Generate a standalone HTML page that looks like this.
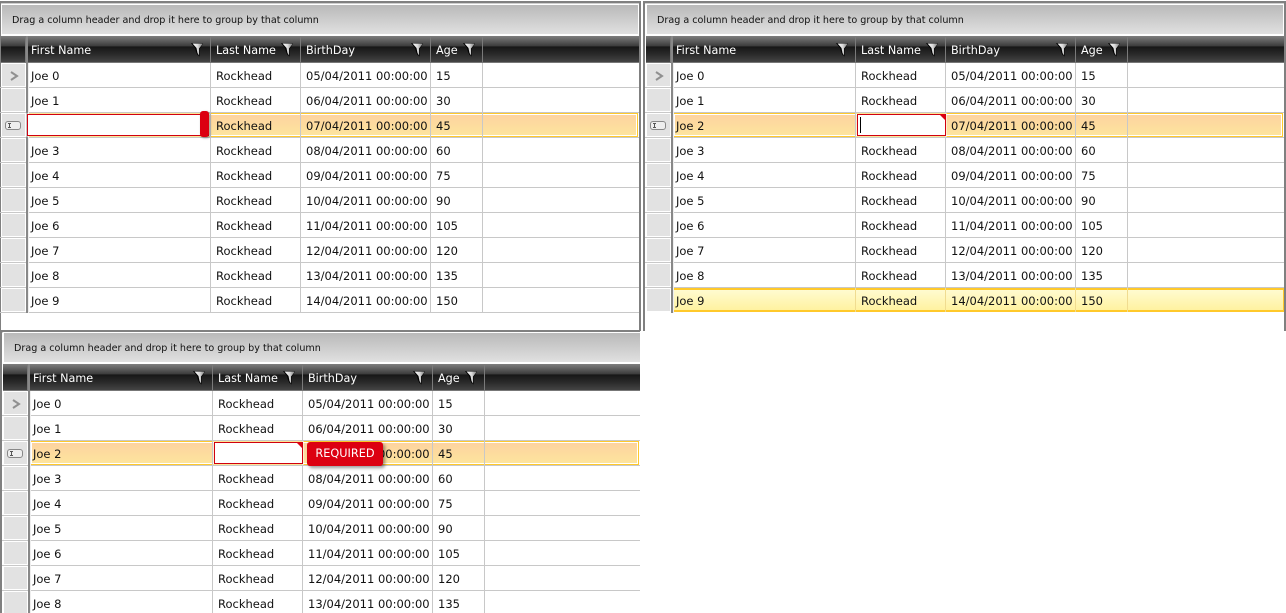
<!DOCTYPE html>
<html><head><meta charset="utf-8"><style>
html,body{margin:0;padding:0;background:#fff;width:1286px;height:613px;overflow:hidden}
body{position:relative;font-family:"DejaVu Sans","Liberation Sans",sans-serif;font-size:11.5px;color:#111}
.clip{position:absolute;overflow:hidden}
.g{position:absolute;top:0;left:0;width:643px;height:331px}
.o{position:absolute;left:-2px;top:1px;width:643px;height:331px;box-sizing:border-box;border:3px solid #808080;border-width:2px 2px 2px 3px;box-shadow:inset 0 1px #cfcfcf}
.o.n{border-bottom:0;border-left-width:2px;height:330px}
.t{position:absolute;left:1px;top:4px;width:638px;height:31px;box-sizing:border-box;border:1px solid #fff;background:linear-gradient(#b9b9b9,#e0e0e0);font-size:9.6px;line-height:31px;padding-left:10px;color:#111}
.h{position:absolute;left:1px;top:36px;width:638px;height:27px;box-sizing:border-box;border-bottom:1px solid #777;background:linear-gradient(#7e7e7e 0,#3c3c3c 38%,#171717 42%,#2a2a2a 70%,#444 100%)}
.h span{position:absolute;top:0;height:26px;line-height:29px;color:#fff;white-space:nowrap;font-size:11.2px}
.s{position:absolute;top:36px;width:1px;height:26px;background:#7a7a7a}
.h svg{position:absolute;top:7px;width:13px;height:14px}
.rows{position:absolute;left:0;top:63px;width:639px}
.r{position:relative;height:25px;box-sizing:border-box;border-bottom:1px solid #c8c8c8}
.r:before{content:"";position:absolute;left:1px;top:0;width:25px;height:24px;box-sizing:border-box;border:1px solid #fff;background:#e2e2e2}
.r span{position:absolute;top:1px;line-height:25px;white-space:nowrap}
.a{left:31px}.b{left:216px}.c{left:306px}.d{left:436px}
.v{position:absolute;top:63px;width:1px;height:250px;background:#c8c8c8}
.w{position:absolute;left:26px;top:36px;width:2px;height:277px;background:#888}
.x{position:absolute;left:28px;top:63px;width:1px;height:250px;background:#eee}
.cur{position:absolute;left:28px;top:113px;width:610px;height:24px;box-sizing:border-box;border:1px solid #ffc92b;box-shadow:inset 0 0 0 1px #fff;background:linear-gradient(#fdd2a0,#fde59d)}
.sel{position:absolute;left:27px;top:288px;width:612px;height:24px;box-sizing:border-box;border:1px solid #ffc92b;border-width:2px 1px;background:linear-gradient(#fffbd0,#fff2a0)}
.e{position:absolute;top:114px;height:22px;box-sizing:border-box;border:1px solid #d0000f;background:#fff;box-shadow:0 0 0 1px rgba(255,255,255,.5)}
.tab{position:absolute;left:200px;top:111px;width:9px;height:26px;background:#dc0011;border-radius:3px;box-shadow:1px 1px 2px rgba(0,0,0,.4)}
.tri{position:absolute;left:294px;top:114px;width:0;height:0;border-top:6px solid #dc0011;border-left:6px solid transparent}
.caret{position:absolute;left:215px;top:117px;width:1px;height:16px;background:#000}
.tip{position:absolute;left:305px;top:114px;width:76px;height:24px;line-height:24px;background:#dc0011;color:#fff;border-radius:3px;text-align:center;font-size:11.3px;box-shadow:2px 2px 3px rgba(0,0,0,.4)}
.ind{position:absolute;left:0;top:0}
.g3{top:-2px;height:285px}
.g3 .o{left:-2px;top:1px;width:640px;height:284px;border-width:3px 0 0 2px}
.g3 .t{width:637px;border-right:0}
.g3 .h{width:637px}
.g3 .rows{width:638px;height:222px;overflow:hidden}
.g3 .cur{width:609px}
.g3 .v,.g3 .x{height:222px}
.g3 .w{height:249px}
.g2 .v{height:225px}
.y{position:absolute;top:288px;width:1px;height:24px;background:#f0dc90}
</style></head><body>
<svg width="0" height="0" style="position:absolute"><defs><linearGradient id="f" x1="0" y1="0" x2="1" y2="0"><stop offset="0" stop-color="#fff"/><stop offset=".5" stop-color="#d8d8d8"/><stop offset="1" stop-color="#777"/></linearGradient></defs></svg>

<div class="clip" style="left:0;top:0;width:641px;height:331px"><div class="g">
<div class="o"></div>
<div class="t">Drag a column header and drop it here to group by that column</div>
<div class="h">
<span style="left:30px">First Name</span><span style="left:215px">Last Name</span><span style="left:305px">BirthDay</span><span style="left:435px">Age</span>
<svg style="left:190px" viewBox="0 0 13 14"><path d="M0 0H12V1L8.5 6V13.5L6.5 12L5 9L4 5Z" fill="#000"/><path d="M1.5 .5H12L8 5.5V12.5L6.5 10L5.5 5Z" fill="url(#f)"/></svg>
<svg style="left:280px" viewBox="0 0 13 14"><path d="M0 0H12V1L8.5 6V13.5L6.5 12L5 9L4 5Z" fill="#000"/><path d="M1.5 .5H12L8 5.5V12.5L6.5 10L5.5 5Z" fill="url(#f)"/></svg>
<svg style="left:410px" viewBox="0 0 13 14"><path d="M0 0H12V1L8.5 6V13.5L6.5 12L5 9L4 5Z" fill="#000"/><path d="M1.5 .5H12L8 5.5V12.5L6.5 10L5.5 5Z" fill="url(#f)"/></svg>
<svg style="left:462px" viewBox="0 0 13 14"><path d="M0 0H12V1L8.5 6V13.5L6.5 12L5 9L4 5Z" fill="#000"/><path d="M1.5 .5H12L8 5.5V12.5L6.5 10L5.5 5Z" fill="url(#f)"/></svg>
</div>
<i class="s" style="left:25px"></i><i class="s" style="left:210px"></i><i class="s" style="left:300px"></i><i class="s" style="left:430px"></i><i class="s" style="left:482px"></i>
<div class="cur"></div>
<div class="rows">
<div class="r"><span class="a">Joe 0</span><span class="b">Rockhead</span><span class="c">05/04/2011 00:00:00</span><span class="d">15</span></div>
<div class="r"><span class="a">Joe 1</span><span class="b">Rockhead</span><span class="c">06/04/2011 00:00:00</span><span class="d">30</span></div>
<div class="r"><span class="b">Rockhead</span><span class="c">07/04/2011 00:00:00</span><span class="d">45</span></div>
<div class="r"><span class="a">Joe 3</span><span class="b">Rockhead</span><span class="c">08/04/2011 00:00:00</span><span class="d">60</span></div>
<div class="r"><span class="a">Joe 4</span><span class="b">Rockhead</span><span class="c">09/04/2011 00:00:00</span><span class="d">75</span></div>
<div class="r"><span class="a">Joe 5</span><span class="b">Rockhead</span><span class="c">10/04/2011 00:00:00</span><span class="d">90</span></div>
<div class="r"><span class="a">Joe 6</span><span class="b">Rockhead</span><span class="c">11/04/2011 00:00:00</span><span class="d">105</span></div>
<div class="r"><span class="a">Joe 7</span><span class="b">Rockhead</span><span class="c">12/04/2011 00:00:00</span><span class="d">120</span></div>
<div class="r"><span class="a">Joe 8</span><span class="b">Rockhead</span><span class="c">13/04/2011 00:00:00</span><span class="d">135</span></div>
<div class="r"><span class="a">Joe 9</span><span class="b">Rockhead</span><span class="c">14/04/2011 00:00:00</span><span class="d">150</span></div>
</div>
<i class="w"></i><i class="x"></i>
<i class="v" style="left:210px"></i><i class="v" style="left:300px"></i><i class="v" style="left:430px"></i><i class="v" style="left:482px"></i>
<svg class="ind" width="30" height="140"><path d="M11 72L17 76L11 80" fill="none" stroke="#909090" stroke-width="2"/><rect x="5.5" y="121.5" width="15" height="8" rx="2.5" fill="#eee" stroke="#888"/><path d="M8 123.5H11M8 127.5H11M9.5 123.5V127.5" stroke="#555" fill="none"/></svg>
<div class="e" style="left:27px;width:182px"></div><div class="tab"></div>
</div></div>

<div class="g g2" style="left:645px">
<div class="o n"></div>
<div class="t">Drag a column header and drop it here to group by that column</div>
<div class="h">
<span style="left:30px">First Name</span><span style="left:215px">Last Name</span><span style="left:305px">BirthDay</span><span style="left:435px">Age</span>
<svg style="left:190px" viewBox="0 0 13 14"><path d="M0 0H12V1L8.5 6V13.5L6.5 12L5 9L4 5Z" fill="#000"/><path d="M1.5 .5H12L8 5.5V12.5L6.5 10L5.5 5Z" fill="url(#f)"/></svg>
<svg style="left:280px" viewBox="0 0 13 14"><path d="M0 0H12V1L8.5 6V13.5L6.5 12L5 9L4 5Z" fill="#000"/><path d="M1.5 .5H12L8 5.5V12.5L6.5 10L5.5 5Z" fill="url(#f)"/></svg>
<svg style="left:410px" viewBox="0 0 13 14"><path d="M0 0H12V1L8.5 6V13.5L6.5 12L5 9L4 5Z" fill="#000"/><path d="M1.5 .5H12L8 5.5V12.5L6.5 10L5.5 5Z" fill="url(#f)"/></svg>
<svg style="left:462px" viewBox="0 0 13 14"><path d="M0 0H12V1L8.5 6V13.5L6.5 12L5 9L4 5Z" fill="#000"/><path d="M1.5 .5H12L8 5.5V12.5L6.5 10L5.5 5Z" fill="url(#f)"/></svg>
</div>
<i class="s" style="left:25px"></i><i class="s" style="left:210px"></i><i class="s" style="left:300px"></i><i class="s" style="left:430px"></i><i class="s" style="left:482px"></i>
<div class="cur"></div><div class="sel"></div>
<div class="rows">
<div class="r"><span class="a">Joe 0</span><span class="b">Rockhead</span><span class="c">05/04/2011 00:00:00</span><span class="d">15</span></div>
<div class="r"><span class="a">Joe 1</span><span class="b">Rockhead</span><span class="c">06/04/2011 00:00:00</span><span class="d">30</span></div>
<div class="r"><span class="a">Joe 2</span><span class="c">07/04/2011 00:00:00</span><span class="d">45</span></div>
<div class="r"><span class="a">Joe 3</span><span class="b">Rockhead</span><span class="c">08/04/2011 00:00:00</span><span class="d">60</span></div>
<div class="r"><span class="a">Joe 4</span><span class="b">Rockhead</span><span class="c">09/04/2011 00:00:00</span><span class="d">75</span></div>
<div class="r"><span class="a">Joe 5</span><span class="b">Rockhead</span><span class="c">10/04/2011 00:00:00</span><span class="d">90</span></div>
<div class="r"><span class="a">Joe 6</span><span class="b">Rockhead</span><span class="c">11/04/2011 00:00:00</span><span class="d">105</span></div>
<div class="r"><span class="a">Joe 7</span><span class="b">Rockhead</span><span class="c">12/04/2011 00:00:00</span><span class="d">120</span></div>
<div class="r"><span class="a">Joe 8</span><span class="b">Rockhead</span><span class="c">13/04/2011 00:00:00</span><span class="d">135</span></div>
<div class="r" style="border-bottom:0"><span class="a">Joe 9</span><span class="b">Rockhead</span><span class="c">14/04/2011 00:00:00</span><span class="d">150</span></div>
</div>
<i class="w"></i><i class="x"></i>
<i class="v" style="left:210px"></i><i class="v" style="left:300px"></i><i class="v" style="left:430px"></i><i class="v" style="left:482px"></i>
<i class="y" style="left:210px"></i><i class="y" style="left:300px"></i><i class="y" style="left:430px"></i><i class="y" style="left:482px"></i>
<svg class="ind" width="30" height="140"><path d="M11 72L17 76L11 80" fill="none" stroke="#909090" stroke-width="2"/><rect x="5.5" y="121.5" width="15" height="8" rx="2.5" fill="#eee" stroke="#888"/><path d="M8 123.5H11M8 127.5H11M9.5 123.5V127.5" stroke="#555" fill="none"/></svg>
<div class="e" style="left:212px;width:89px"></div><div class="tri"></div><div class="caret"></div>
</div>

<div class="clip" style="left:0;top:330px;width:640px;height:283px"><div class="g g3" style="left:2px">
<div class="o"></div>
<div class="t">Drag a column header and drop it here to group by that column</div>
<div class="h">
<span style="left:30px">First Name</span><span style="left:215px">Last Name</span><span style="left:305px">BirthDay</span><span style="left:435px">Age</span>
<svg style="left:190px" viewBox="0 0 13 14"><path d="M0 0H12V1L8.5 6V13.5L6.5 12L5 9L4 5Z" fill="#000"/><path d="M1.5 .5H12L8 5.5V12.5L6.5 10L5.5 5Z" fill="url(#f)"/></svg>
<svg style="left:280px" viewBox="0 0 13 14"><path d="M0 0H12V1L8.5 6V13.5L6.5 12L5 9L4 5Z" fill="#000"/><path d="M1.5 .5H12L8 5.5V12.5L6.5 10L5.5 5Z" fill="url(#f)"/></svg>
<svg style="left:410px" viewBox="0 0 13 14"><path d="M0 0H12V1L8.5 6V13.5L6.5 12L5 9L4 5Z" fill="#000"/><path d="M1.5 .5H12L8 5.5V12.5L6.5 10L5.5 5Z" fill="url(#f)"/></svg>
<svg style="left:462px" viewBox="0 0 13 14"><path d="M0 0H12V1L8.5 6V13.5L6.5 12L5 9L4 5Z" fill="#000"/><path d="M1.5 .5H12L8 5.5V12.5L6.5 10L5.5 5Z" fill="url(#f)"/></svg>
</div>
<i class="s" style="left:25px"></i><i class="s" style="left:210px"></i><i class="s" style="left:300px"></i><i class="s" style="left:430px"></i><i class="s" style="left:482px"></i>
<div class="cur"></div>
<div class="rows">
<div class="r"><span class="a">Joe 0</span><span class="b">Rockhead</span><span class="c">05/04/2011 00:00:00</span><span class="d">15</span></div>
<div class="r"><span class="a">Joe 1</span><span class="b">Rockhead</span><span class="c">06/04/2011 00:00:00</span><span class="d">30</span></div>
<div class="r"><span class="a">Joe 2</span><span class="c">07/04/2011 00:00:00</span><span class="d">45</span></div>
<div class="r"><span class="a">Joe 3</span><span class="b">Rockhead</span><span class="c">08/04/2011 00:00:00</span><span class="d">60</span></div>
<div class="r"><span class="a">Joe 4</span><span class="b">Rockhead</span><span class="c">09/04/2011 00:00:00</span><span class="d">75</span></div>
<div class="r"><span class="a">Joe 5</span><span class="b">Rockhead</span><span class="c">10/04/2011 00:00:00</span><span class="d">90</span></div>
<div class="r"><span class="a">Joe 6</span><span class="b">Rockhead</span><span class="c">11/04/2011 00:00:00</span><span class="d">105</span></div>
<div class="r"><span class="a">Joe 7</span><span class="b">Rockhead</span><span class="c">12/04/2011 00:00:00</span><span class="d">120</span></div>
<div class="r" style="height:22px;border-bottom:0"><span class="a">Joe 8</span><span class="b">Rockhead</span><span class="c">13/04/2011 00:00:00</span><span class="d">135</span></div>
</div>
<i class="w"></i><i class="x"></i>
<i class="v" style="left:210px"></i><i class="v" style="left:300px"></i><i class="v" style="left:430px"></i><i class="v" style="left:482px"></i>
<svg class="ind" width="30" height="140"><path d="M11 72L17 76L11 80" fill="none" stroke="#909090" stroke-width="2"/><rect x="5.5" y="121.5" width="15" height="8" rx="2.5" fill="#eee" stroke="#888"/><path d="M8 123.5H11M8 127.5H11M9.5 123.5V127.5" stroke="#555" fill="none"/></svg>
<div class="e" style="left:212px;width:89px"></div><div class="tri"></div>
<div class="tip">REQUIRED</div>
</div></div>

</body></html>
